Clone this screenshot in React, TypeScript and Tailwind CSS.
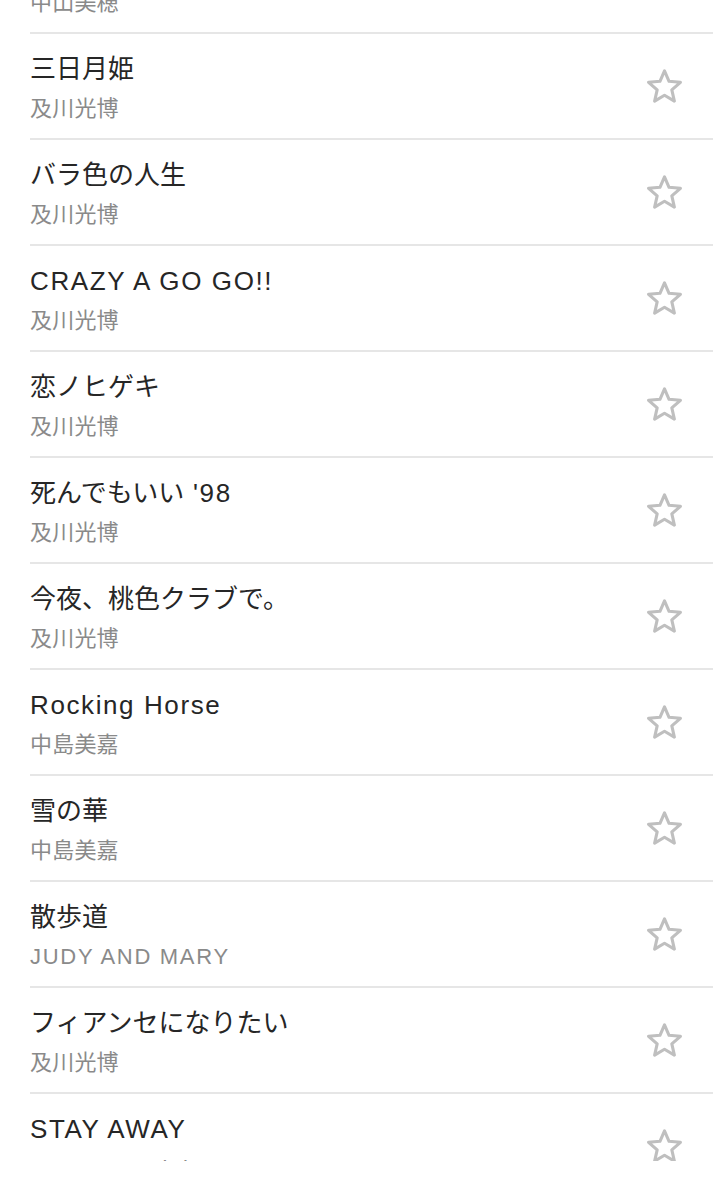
import React from "react";

type Song = { title: string; artist: string };

const songs: Song[] = [
  { title: "ただ泣きたくなるの", artist: "中山美穂" },
  { title: "三日月姫", artist: "及川光博" },
  { title: "バラ色の人生", artist: "及川光博" },
  { title: "CRAZY A GO GO!!", artist: "及川光博" },
  { title: "恋ノヒゲキ", artist: "及川光博" },
  { title: "死んでもいい '98", artist: "及川光博" },
  { title: "今夜、桃色クラブで。", artist: "及川光博" },
  { title: "Rocking Horse", artist: "中島美嘉" },
  { title: "雪の華", artist: "中島美嘉" },
  { title: "散歩道", artist: "JUDY AND MARY" },
  { title: "フィアンセになりたい", artist: "及川光博" },
  { title: "STAY AWAY", artist: "L'Arc~en~Ciel" },
];

function Runs({ text, latinClass, cjkClass }: { text: string; latinClass: string; cjkClass: string }) {
  const parts = text.split(/([\u0000-\u00ff]+)/).filter((p) => p.length > 0);
  return (
    <>
      {parts.map((p, i) => (
        <span key={i} className={/^[\u0000-\u00ff]+$/.test(p) ? latinClass : cjkClass}>
          {p}
        </span>
      ))}
    </>
  );
}

function StarIcon() {
  return (
    <svg width="37" height="35" viewBox="0 0 36 34" fill="none" aria-hidden="true">
      <polygon
        points="18,1.8 22.41,11.93 33.5,12.95 25.13,20.32 27.6,31.2 18,25.5 8.4,31.2 10.87,20.32 2.5,12.95 13.59,11.93"
        stroke="#bfbfbf"
        strokeWidth="3"
        strokeLinejoin="round"
      />
    </svg>
  );
}

function Row({ song }: { song: Song }) {
  return (
    <div className="pl-[30px]">
      <div className="flex items-center border-b-2 border-[#e6e6e6] h-[106px]">
        <div className="flex-1 min-w-0 pt-[19px] pb-[15px]">
          <div className="text-[26px] leading-[32px] text-[#262626] whitespace-nowrap">
            <Runs text={song.title} latinClass="tracking-[1.6px]" cjkClass="tracking-[0px]" />
          </div>
          <div className="mt-[10px] text-[22px] leading-[28px] text-[#8a8a8a] whitespace-nowrap">
            <Runs text={song.artist} latinClass="tracking-[1.7px]" cjkClass="tracking-[0.2px]" />
          </div>
        </div>
        <div className="pr-[30px] flex items-center">
          <StarIcon />
        </div>
      </div>
    </div>
  );
}

export default function App() {
  return (
    <div
      className="w-[713px] h-[1199px] bg-white overflow-hidden"
      style={{ fontFamily: "'Liberation Sans', 'Noto Sans CJK JP', sans-serif" }}
    >
      <div className="h-[1161px] overflow-hidden">
        <div className="mt-[-72px]">
          {songs.map((s, i) => (
            <Row key={i} song={s} />
          ))}
        </div>
      </div>
    </div>
  );
}
